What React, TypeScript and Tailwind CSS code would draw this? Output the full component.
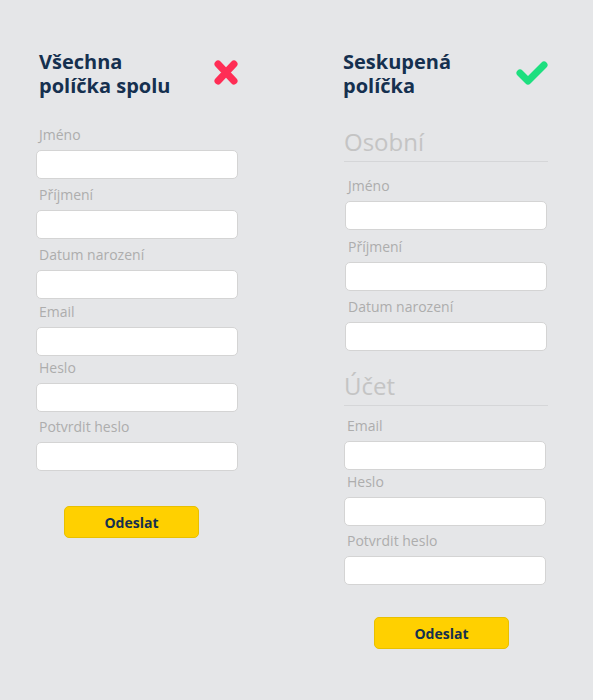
const font = { fontFamily: '"Open Sans", "Noto Sans", sans-serif' }

type Field = { label: string; mt: string }

function CrossIcon() {
    return (
        <svg width="24" height="25" viewBox="0 0 24 25" className="mt-[10px]">
            <path d="M4 4 L20 21 M20 4 L4 21" stroke="#ff2d55" strokeWidth="7" strokeLinecap="round" />
        </svg>
    )
}

function CheckIcon() {
    return (
        <svg width="32" height="25" viewBox="0 0 32 25" className="mt-[10px]">
            <path d="M4 13 L12 21 L28 5" stroke="#1ddf7f" strokeWidth="7" strokeLinecap="round" strokeLinejoin="round" fill="none" />
        </svg>
    )
}

function Input({ field, pad }: { field: Field; pad: string }) {
    return (
        <div className={field.mt}>
            <div className={`h-5 text-[14px] leading-5 text-[#adadad] ${pad}`}>{field.label}</div>
            <div className="mt-[5px] h-[29px] rounded-[5px] border border-[#d4d4d4] bg-white" />
        </div>
    )
}

function Button({ className }: { className: string }) {
    return (
        <button
            className={`h-[32px] w-[135px] rounded-[5px] border border-[#e8c000] bg-[#ffd000] text-[14px] font-bold text-[#15304f] ${className}`}
        >
            Odeslat
        </button>
    )
}

function Section({ title, className }: { title: string; className: string }) {
    return (
        <div className={`border-b border-[#d5d6d8] pb-[3px] text-[24px] leading-[32px] text-[#c4c4c4] ${className}`}>
            {title}
        </div>
    )
}

const leftFields: Field[] = [
    { label: "Jméno", mt: "mt-[27px]" },
    { label: "Příjmení", mt: "mt-[6px]" },
    { label: "Datum narození", mt: "mt-[6px]" },
    { label: "Email", mt: "mt-[3px]" },
    { label: "Heslo", mt: "mt-[2px]" },
    { label: "Potvrdit heslo", mt: "mt-[5px]" },
]

const personal: Field[] = [
    { label: "Jméno", mt: "mt-[14px]" },
    { label: "Příjmení", mt: "mt-[7px]" },
    { label: "Datum narození", mt: "mt-[6px]" },
]

const account: Field[] = [
    { label: "Email", mt: "mt-[10px]" },
    { label: "Heslo", mt: "mt-[2px]" },
    { label: "Potvrdit heslo", mt: "mt-[5px]" },
]

export default function App() {
    return (
        <div className="min-h-screen bg-[#e5e6e8]" style={font}>
            <div className="flex pt-[50px]">
                {/* all fields together */}
                <div className="ml-[36px] w-[202px]">
                    <div className="flex items-start justify-between pl-[3px]">
                        <h2 className="text-[20px] font-bold leading-[24px] text-[#15304f]">
                            Všechna
                            <br />
                            políčka spolu
                        </h2>
                        <CrossIcon />
                    </div>
                    {leftFields.map((f) => (
                        <Input key={f.label} field={f} pad="pl-[3px]" />
                    ))}
                    <Button className="ml-[28px] mt-[35px]" />
                </div>

                {/* grouped fields */}
                <div className="ml-[105px] w-[205px]">
                    <div className="flex items-start justify-between">
                        <h2 className="text-[20px] font-bold leading-[24px] text-[#15304f]">
                            Seskupená
                            <br />
                            políčka
                        </h2>
                        <CheckIcon />
                    </div>
                    <Section title="Osobní" className="mt-[28px] ml-px" />
                    <div className="ml-[2px] w-[202px]">
                        {personal.map((f) => (
                            <Input key={f.label} field={f} pad="pl-[3px]" />
                        ))}
                    </div>
                    <Section title="Účet" className="mt-[19px] ml-px" />
                    <div className="ml-px w-[202px]">
                        {account.map((f) => (
                            <Input key={f.label} field={f} pad="pl-[3px]" />
                        ))}
                    </div>
                    <Button className="ml-[31px] mt-[32px]" />
                </div>
            </div>
        </div>
    )
}
